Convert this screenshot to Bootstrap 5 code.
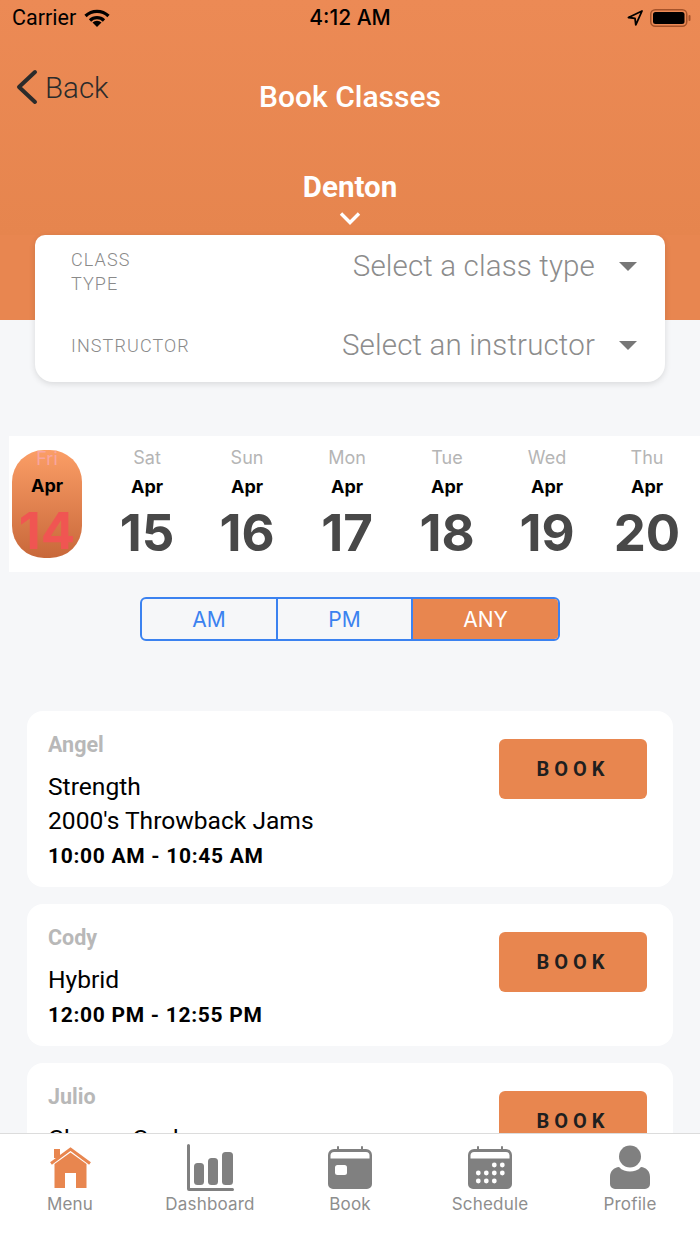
<!DOCTYPE html>
<html lang="en">
<head>
<meta charset="UTF-8">
<meta name="viewport" content="width=device-width, initial-scale=1.0">
<title>Book Classes</title>
<link rel="stylesheet" href="https://cdn.jsdelivr.net/npm/bootstrap@5.3.3/dist/css/bootstrap.min.css">
<style>
body { background: #f6f7f9; font-family: Roboto, sans-serif; }
.app-screen { width: 700px; height: 1244px; overflow: hidden; }
.top-orange { background: linear-gradient(#ec8a55, #e6854e); height: 235px; color: #fff; }
.status-row { height: 36px; padding: 0 9px 0 12px; color: #000; }
.carrier-text { font-size: 21.5px; line-height: 36px; }
.clock-text { font-family: Inter, sans-serif; font-size: 21px; font-weight: 500; left: 0; right: 0; top: 0; line-height: 36px; text-align: center; }
.back-row { height: 36px; margin-top: 33px; padding-left: 16px; }
.back-text { font-size: 29.5px; font-weight: 300; color: #2b2b2b; line-height: 1; margin-left: 7px; padding-top: 3px; }
.page-title { font-size: 30px; font-weight: 500; text-align: center; line-height: 30px; margin-top: -23px; height: 90px; }
.site-name { font-size: 29.5px; font-weight: 700; text-align: center; line-height: 30px; }
.site-chevron { display: block; margin: 9px auto 0; }
.orange-under { background: #e88650; height: 85px; }
.filter-panel { margin: -85px 35px 0; height: 147px; border-radius: 10px 10px 18px 18px; padding: 0 28px 0 36px; box-shadow: 0 2px 6px rgba(0,0,0,.12); }
.filter-label { font-size: 18px; font-weight: 300; color: #8a8a8a; letter-spacing: 1.1px; line-height: 24px; }
.filter-value { font-size: 29.5px; font-weight: 300; color: #8c8c8c; line-height: 1; letter-spacing: .15px; }
.caret-down { width: 0; height: 0; border-left: 9px solid transparent; border-right: 9px solid transparent; border-top: 9px solid #777; margin-left: 24px; }
.date-strip { margin: 54px 0 0 9px; height: 136px; background: #fff; }
.date-cell { width: 100px; text-align: center; font-family: Inter, sans-serif; padding-top: 11px; }
.date-cell.first-cell { width: 76px; }
.day-name { font-size: 18px; color: #b5b5b5; line-height: 22px; }
.month-name { font-size: 18px; font-weight: 700; color: #000; line-height: 22px; margin-top: 7px; }
.day-num { font-size: 51px; font-weight: 700; color: #484848; line-height: 58px; margin-top: 6px; }
.today-pill { margin: 14px 0 0 3px; width: 70px; height: 108px; border-radius: 32px; background: linear-gradient(#fb9e66, #c8683a); text-align: center; font-family: Inter, sans-serif; }
.today-pill .day-name { color: #f8a5a0; line-height: 18px; }
.today-pill .month-name { margin-top: 7px; }
.today-pill .day-num { color: #f05552; line-height: 52px; margin-top: 8px; }
.ampm-group { width: 420px; height: 44px; margin: 25px auto 0; border: 2px solid #3b82f0; border-radius: 6px; overflow: hidden; font-family: Inter, sans-serif; font-size: 21px; }
.ampm-item { color: #3b82f0; line-height: 42px; text-align: center; }
.ampm-item + .ampm-item { border-left: 2px solid #3b82f0; }
.ampm-item.picked { background: #e8864f; color: #fff; }
.class-list { margin: 70px 27px 0 27px; }
.class-card { border-radius: 16px; padding: 21px 21px 14px; margin-bottom: 17px; }
.coach-name { font-size: 21.5px; font-weight: 700; color: #b8b8b8; line-height: 26px; }
.class-name { font-size: 24.6px; color: #000; line-height: 34px; margin-top: 12px; }
.class-time { font-size: 21px; font-weight: 700; color: #000; line-height: 34px; letter-spacing: .7px; margin-top: 1px; }
.book-btn { width: 148px; height: 60px; background: #e8864f; color: #1f1f1f; border: 0; border-radius: 6px; font-size: 20px; font-weight: 700; letter-spacing: 5px; margin: 7px 5px 0 0; flex: none; }
.tab-strip { height: 111px; flex: none; border-top: 1px solid #dcdcdc; }
.tab-entry { width: 140px; text-align: center; color: #8e8e8e; font-family: Inter, sans-serif; font-size: 17px; letter-spacing: .2px; line-height: 20px; padding-top: 10px; }
.tab-entry svg { display: block; margin: 0 auto; }
</style>
</head>
<body>
<div class="app-screen d-flex flex-column">
  <div class="flex-grow-1 overflow-hidden">
    <div class="top-orange">
      <div class="status-row d-flex align-items-center justify-content-between position-relative">
        <div class="d-flex align-items-center gap-2">
          <span class="carrier-text">Carrier</span>
          <svg width="26" height="18" viewBox="0 0 26 18" fill="none" stroke="#000" stroke-width="3.2"><path d="M1.500 7a16.500 16.500 0 0 1 23 0"/><path d="M6 11.500a10 10 0 0 1 14 0"/><path d="M13 18l-4.500-4.500a6.500 6.500 0 0 1 9 0z" fill="#000" stroke="none"/></svg>
        </div>
        <span class="clock-text position-absolute">4:12 AM</span>
        <div class="d-flex align-items-center" style="gap:7px">
          <svg width="16" height="16" viewBox="0 0 16 16" fill="none" stroke="#000" stroke-width="1.8"><path d="M15 1L1.500 7.500l6.500 .8 .8 6.500z" stroke-linejoin="round"/></svg>
          <svg width="41" height="18" viewBox="0 0 41 18"><rect x=".75" y=".75" width="36" height="16.500" rx="4.500" fill="none" stroke="#a5532a" stroke-width="1.500"/><rect x="3" y="3" width="31.500" height="12" rx="2.500" fill="#000"/><rect x="38.500" y="6" width="2" height="6" rx="1" fill="#a5532a"/></svg>
        </div>
      </div>
      <div class="back-row d-flex align-items-center">
        <svg width="22" height="36" viewBox="0 0 22 36" fill="none" stroke="#2b2b2b" stroke-width="4" stroke-linecap="round" stroke-linejoin="round"><path d="M19 3L3 18l16 15"/></svg>
        <span class="back-text">Back</span>
      </div>
      <div class="page-title">Book Classes</div>
      <div class="site-name">Denton</div>
      <svg class="site-chevron" width="22" height="14" viewBox="0 0 22 14" fill="none" stroke="#fff" stroke-width="3.400"><path d="M2 2.500l9 9 9-9"/></svg>
    </div>
    <div class="orange-under"></div>
    <div class="filter-panel bg-white">
      <div class="d-flex justify-content-between align-items-start" style="padding-top:4px;height:80px">
        <div class="filter-label" style="padding-top:9px">CLASS<br>TYPE</div>
        <div class="d-flex align-items-center" style="margin-top:13px"><span class="filter-value">Select a class type</span><span class="caret-down"></span></div>
      </div>
      <div class="d-flex justify-content-between align-items-center" style="height:61px">
        <div class="filter-label">INSTRUCTOR</div>
        <div class="d-flex align-items-center"><span class="filter-value">Select an instructor</span><span class="caret-down"></span></div>
      </div>
    </div>
    <div class="date-strip d-flex">
      <div class="date-cell first-cell p-0"><div class="today-pill"><div class="day-name">Fri</div><div class="month-name">Apr</div><div class="day-num">14</div></div></div>
      <div class="date-cell" style="margin-left:12px"><div class="day-name">Sat</div><div class="month-name">Apr</div><div class="day-num">15</div></div>
      <div class="date-cell"><div class="day-name">Sun</div><div class="month-name">Apr</div><div class="day-num">16</div></div>
      <div class="date-cell"><div class="day-name">Mon</div><div class="month-name">Apr</div><div class="day-num">17</div></div>
      <div class="date-cell"><div class="day-name">Tue</div><div class="month-name">Apr</div><div class="day-num">18</div></div>
      <div class="date-cell"><div class="day-name">Wed</div><div class="month-name">Apr</div><div class="day-num">19</div></div>
      <div class="date-cell"><div class="day-name">Thu</div><div class="month-name">Apr</div><div class="day-num">20</div></div>
    </div>
    <div class="ampm-group d-flex">
      <div class="ampm-item" style="width:134px">AM</div>
      <div class="ampm-item" style="width:135px">PM</div>
      <div class="ampm-item picked flex-grow-1">ANY</div>
    </div>
    <div class="class-list">
      <div class="class-card bg-white d-flex justify-content-between">
        <div><div class="coach-name">Angel</div><div class="class-name">Strength<br>2000's Throwback Jams</div><div class="class-time">10:00 AM - 10:45 AM</div></div>
        <button class="book-btn" type="button">BOOK</button>
      </div>
      <div class="class-card bg-white d-flex justify-content-between">
        <div><div class="coach-name">Cody</div><div class="class-name">Hybrid</div><div class="class-time">12:00 PM - 12:55 PM</div></div>
        <button class="book-btn" type="button">BOOK</button>
      </div>
      <div class="class-card bg-white d-flex justify-content-between">
        <div><div class="coach-name">Julio</div><div class="class-name">Chorus Cycle</div></div>
        <button class="book-btn" type="button">BOOK</button>
      </div>
    </div>
  </div>
  <div class="tab-strip bg-white d-flex justify-content-center">
    <div class="tab-entry">
      <svg width="41" height="50" viewBox="0 -3 41 50" fill="#e8864f"><path d="M4.500 17L20.500 5.500 36.500 17v24H26V26H15v15H4.500z"/><path d="M1 16.500L20.500 2 40 16.500" fill="none" stroke="#e8864f" stroke-width="3"/><rect x="4" y="2" width="6" height="9"/></svg>
      Menu
    </div>
    <div class="tab-entry">
      <svg width="47" height="50" viewBox="0 0 47 50" fill="#808080"><path d="M0 1.500a1.500 1.500 0 0 1 3 0V44h42.500a1.500 1.500 0 0 1 0 3H2a2 2 0 0 1-2-2z"/><rect x="7" y="19" width="10" height="22" rx="3.500"/><rect x="21" y="14" width="10" height="27" rx="3.500"/><rect x="35" y="8" width="11" height="33" rx="3.500"/></svg>
      Dashboard
    </div>
    <div class="tab-entry">
      <svg width="44" height="50" viewBox="0 -2 44 50"><path d="M6 3h3V1a1 1 0 0 1 2 0v2h22V1a1 1 0 0 1 2 0v2h3a6 6 0 0 1 6 6v29a5 5 0 0 1-5 5H5a5 5 0 0 1-5-5V9a6 6 0 0 1 6-6z" fill="#808080"/><path d="M6 6h32a3.500 3.500 0 0 1 3.500 3.500v3H2.500v-3A3.500 3.500 0 0 1 6 6z" fill="#fff"/><rect x="7" y="19" width="12" height="10" rx="2.500" fill="#fff"/></svg>
      Book
    </div>
    <div class="tab-entry">
      <svg width="44" height="50" viewBox="0 -2 44 50"><path d="M6 3h3V1a1 1 0 0 1 2 0v2h22V1a1 1 0 0 1 2 0v2h3a6 6 0 0 1 6 6v29a5 5 0 0 1-5 5H5a5 5 0 0 1-5-5V9a6 6 0 0 1 6-6z" fill="#808080"/><path d="M6 6h32a3.500 3.500 0 0 1 3.500 3.500v3H2.500v-3A3.500 3.500 0 0 1 6 6z" fill="#fff"/><g fill="#fff"><circle cx="26.300" cy="19" r="2.400"/><circle cx="34.300" cy="19" r="2.400"/><circle cx="10.300" cy="27" r="2.400"/><circle cx="18.300" cy="27" r="2.400"/><circle cx="26.300" cy="27" r="2.400"/><circle cx="34.300" cy="27" r="2.400"/><circle cx="10.300" cy="35" r="2.400"/><circle cx="18.300" cy="35" r="2.400"/><circle cx="26.300" cy="35" r="2.400"/></g></svg>
      Schedule
    </div>
    <div class="tab-entry">
      <svg width="40" height="50" viewBox="0 -2 40 50" fill="#808080"><circle cx="20" cy="10.500" r="11"/><path d="M9 21c3 3.500 7 4.500 11 4.500s8-1 11-4.500c5 .5 9 4 9 10v7a5 5 0 0 1-5 5H5a5 5 0 0 1-5-5v-7c0-6 4-9.500 9-10z"/></svg>
      Profile
    </div>
  </div>
</div>
<script src="https://cdn.jsdelivr.net/npm/bootstrap@5.3.3/dist/js/bootstrap.bundle.min.js"></script>
</body>
</html>
